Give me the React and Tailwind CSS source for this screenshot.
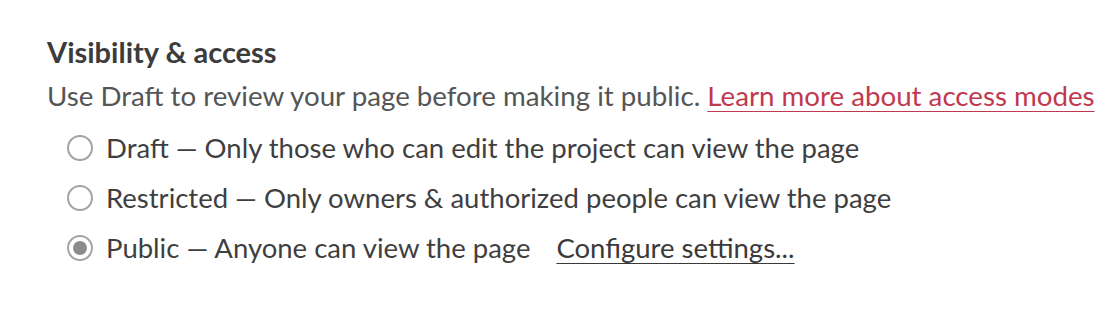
const options = [
  { id: "draft", label: "Draft", desc: "Only those who can edit the project can view the page" },
  { id: "restricted", label: "Restricted", desc: "Only owners & authorized people can view the page" },
  { id: "public", label: "Public", desc: "Anyone can view the page" },
];

function Radio({ checked }) {
  return (
    <span className="flex h-[26px] w-[26px] shrink-0 items-center justify-center rounded-full border-2 border-[#a3a3a3] bg-white">
      {checked && <span className="h-[14px] w-[14px] rounded-full bg-[#8c8c8c]" />}
    </span>
  );
}

export default function App() {
  const selected = "public";
  return (
    <div className="h-[326px] w-[1096px] bg-white pl-[47px] pt-[34px] font-['Lato',sans-serif] text-[#4a4a4a]">
      <h2 className="text-[29px] font-bold leading-[36px] text-[#3c3c3c]">Visibility &amp; access</h2>
      <p className="mt-[8px] text-[27.7px] leading-[36px] text-[#555]">
        Use Draft to review your page before making it public.{" "}
        <a href="#" className="text-[#c0394f] underline decoration-1 underline-offset-[5px]">
          Learn more about access modes
        </a>
      </p>
      <div className="mt-[9px] flex flex-col pl-[20px]">
        {options.map((o) => (
          <label key={o.id} className="flex h-[50px] items-center gap-[13px] text-[27.5px] text-[#3f3f3f]">
            <Radio checked={o.id === selected} />
            <span>
              {o.label} — {o.desc}
            </span>
            {o.id === "public" && (
              <a href="#" className="ml-[13px] text-[#3a3a3a] underline decoration-1 underline-offset-[5px]">
                Configure settings...
              </a>
            )}
          </label>
        ))}
      </div>
    </div>
  );
}
